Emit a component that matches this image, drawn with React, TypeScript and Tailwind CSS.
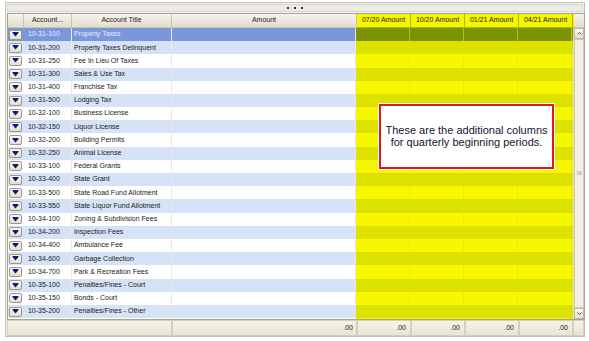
import React from 'react'

const cuentas: [string, string][] = [
  ['10-31-100', 'Property Taxes'],
  ['10-31-200', 'Property Taxes Delinquent'],
  ['10-31-250', 'Fee In Lieu Of Taxes'],
  ['10-31-300', 'Sales & Use Tax'],
  ['10-31-400', 'Franchise Tax'],
  ['10-31-500', 'Lodging Tax'],
  ['10-32-100', 'Business License'],
  ['10-32-150', 'Liquor License'],
  ['10-32-200', 'Building Permits'],
  ['10-32-250', 'Animal License'],
  ['10-33-100', 'Federal Grants'],
  ['10-33-400', 'State Grant'],
  ['10-33-500', 'State Road Fund Allotment'],
  ['10-33-550', 'State Liquor Fund Allotment'],
  ['10-34-100', 'Zoning & Subdivision Fees'],
  ['10-34-200', 'Inspection Fees'],
  ['10-34-400', 'Ambulance Fee'],
  ['10-34-600', 'Garbage Collection'],
  ['10-34-700', 'Park & Recreation Fees'],
  ['10-35-100', 'Penalties/Fines - Court'],
  ['10-35-150', 'Bonds - Court'],
  ['10-35-200', 'Penalties/Fines - Other'],
  ['', ''],
]

const trimestres = ['07/20 Amount', '10/20 Amount', '01/21 Amount', '04/21 Amount']

function BotonFila() {
  return (
    <div className="w-[13px] h-[10px] border border-[#9c9786] rounded-[2px] bg-gradient-to-b from-[#fbfaf5] to-[#e4dfcc] flex items-center justify-center">
      <svg width="7" height="5" viewBox="0 0 7 5">
        <rect x="0.5" y="0" width="6" height="1" fill="#0c1a80" />
        <path d="M0.5 1 L6.5 1 L3.5 4.5 Z" fill="#0c1a80" />
      </svg>
    </div>
  )
}

export default function App() {
  return (
    <div className="w-[589px] h-[341px] bg-white pt-[2px] pl-[5px] overflow-hidden" style={{ fontFamily: '"Liberation Sans", Arial, sans-serif' }}>
      <div className="w-[580px] h-[335px] border border-[#c4c2b8] bg-[#f3f2ec] flex flex-col">
        {/* barra de arrastre */}
        <div className="h-[8px] mx-px mt-px bg-[#ecebe5] border border-[#d8d6cc] flex items-center justify-center gap-[5px]">
          <span className="w-[2px] h-[2px] bg-[#333]" />
          <span className="w-[2px] h-[2px] bg-[#333]" />
          <span className="w-[2px] h-[2px] bg-[#333]" />
        </div>

        <div className="ml-px mt-px w-[578px] h-[308px] border border-[#a8a495] bg-white flex flex-col overflow-hidden">
          {/* encabezado */}
          <div className="h-[14px] flex text-[7px] text-[#222] shrink-0">
            <div className="w-[16px] bg-gradient-to-b from-[#f6f4ec] to-[#e2ddcb] border-r border-b border-[#c9c4b0]" />
            <div className="w-[48px] bg-gradient-to-b from-[#f6f4ec] to-[#e2ddcb] border-r border-b border-[#c9c4b0] flex items-center justify-center">Account...</div>
            <div className="w-[100px] bg-gradient-to-b from-[#f6f4ec] to-[#e2ddcb] border-r border-b border-[#c9c4b0] flex items-center justify-center">Account Title</div>
            <div className="w-[185px] bg-gradient-to-b from-[#f6f4ec] to-[#e2ddcb] border-r border-b border-[#c9c4b0] flex items-center justify-center">Amount</div>
            {trimestres.map((t) => (
              <div key={t} className="w-[54px] bg-[#f6f600] border-r border-b border-[#b9b200] flex items-center justify-center">{t}</div>
            ))}
            <div className="w-[1px] bg-[#f6f600] border-b border-[#b9b200]" />
            <div className="flex-1 bg-gradient-to-b from-[#f6f4ec] to-[#e2ddcb] border-b border-[#c9c4b0]" />
          </div>

          <div className="flex flex-1 min-h-0">
            {/* filas */}
            <div className="w-[566px] overflow-hidden relative">
              {cuentas.map(([num, titulo], i) => {
                const sel = i === 0
                const par = i % 2 === 1
                const azul = sel ? 'bg-[#7b97dc]' : par ? 'bg-[#d6e2f6]' : 'bg-white'
                const amarillo = sel ? 'bg-[#7a9300]' : par ? 'bg-[#dde100]' : 'bg-[#f7f700]'
                const texto = sel ? 'text-[#e6ecff]' : 'text-[#1a1a1a]'
                return (
                  <div key={i} className={`h-[13.2px] flex text-[7px] ${texto}`}>
                    <div className={`w-[16px] ${azul} flex items-center justify-center`}>
                      <BotonFila />
                    </div>
                    <div className={`w-[48px] ${azul} border-r border-[#ece8dc] flex items-center pl-[4px]`}>{num}</div>
                    <div className={`w-[100px] ${azul} border-r border-[#ece8dc] flex items-center pl-[2px] whitespace-nowrap overflow-hidden`}>{titulo}</div>
                    <div className={`w-[185px] ${azul} border-r border-[#ece8dc]`} />
                    {trimestres.map((t) => (
                      <div key={t} className={`w-[54px] ${amarillo} border-r border-[#e6e000]/60`} />
                    ))}
                    <div className={`w-[1px] ${amarillo}`} />
                  </div>
                )
              })}

              {/* nota */}
              <div className="absolute left-[371px] top-[76px] w-[175px] h-[65px] border-2 border-[#e8141c] outline outline-1 outline-white bg-white flex flex-col items-center justify-center text-[11px] leading-[12px] text-[#141432]">
                <span>These are the additional columns</span>
                <span>for quarterly beginning periods.</span>
              </div>
            </div>

            {/* barra de desplazamiento */}
            <div className="w-[11px] bg-[#f4f2ea] border-l border-[#e0ddd0] flex flex-col">
              <div className="h-[11px] border border-[#bcb8a6] bg-gradient-to-b from-[#fbfaf4] to-[#e6e2d2] flex items-center justify-center">
                <svg width="5" height="3" viewBox="0 0 5 3"><path d="M0.5 2.5 L2.5 0.5 L4.5 2.5" stroke="#4d4d4d" fill="none" /></svg>
              </div>
              <div className="flex-1 border border-[#cfcbb8] bg-[#f1efe5] flex items-center justify-center">
                <svg width="5" height="5" viewBox="0 0 5 5"><path d="M0 1H5M0 3H5" stroke="#b0ab98" /></svg>
              </div>
              <div className="h-[11px] border border-[#bcb8a6] bg-gradient-to-b from-[#fbfaf4] to-[#e6e2d2] flex items-center justify-center">
                <svg width="5" height="3" viewBox="0 0 5 3"><path d="M0.5 0.5 L2.5 2.5 L4.5 0.5" stroke="#4d4d4d" fill="none" /></svg>
              </div>
            </div>
          </div>
        </div>

        {/* pie con totales */}
        <div className="ml-px h-[16px] flex text-[7px] text-[#222]">
          <div className="w-[165px] border border-[#d3cfbe] bg-gradient-to-b from-[#f5f3ea] to-[#e8e4d6]" />
          <div className="w-[185px] border border-[#d3cfbe] bg-gradient-to-b from-[#f5f3ea] to-[#e8e4d6] flex items-center justify-end pr-[3px]">.00</div>
          {trimestres.map((t) => (
            <div key={t} className="w-[54px] border border-[#d3cfbe] bg-gradient-to-b from-[#f5f3ea] to-[#e8e4d6] flex items-center justify-end pr-[4px]">.00</div>
          ))}
          <div className="flex-1 border border-[#d3cfbe] bg-gradient-to-b from-[#f5f3ea] to-[#e8e4d6]" />
        </div>
      </div>
    </div>
  )
}
